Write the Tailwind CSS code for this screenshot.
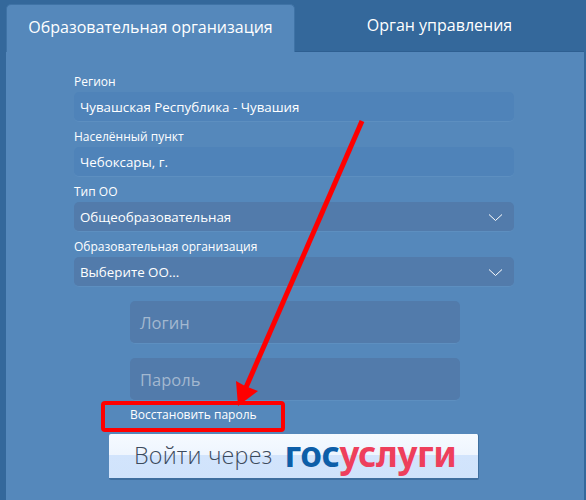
<!DOCTYPE html>
<html lang="ru">
<head>
    <meta charset="UTF-8">
    <title>Вход</title>
    <script src="https://cdn.jsdelivr.net/npm/@tailwindcss/browser@4"></script>
</head>
<body class="bg-[#34689b] h-[500px] overflow-hidden font-['Open_Sans',sans-serif] text-white relative">
    <div class="pl-[6px] pt-[4px] w-[584px]">
        <!-- Вкладки -->
        <div class="flex h-[48px] text-[16px]">
            <div class="w-[289px] bg-[#5588bb] rounded-t-[5px] border-t border-x border-[#3f73a6] flex items-center justify-center pb-[3px]">Образовательная организация</div>
            <div class="flex-1 border-b border-[#2e5f91] flex items-center justify-center pb-[5px]">Орган управления</div>
        </div>

        <!-- Форма -->
        <div class="bg-[#5588bb] h-[448px] pt-[24px] px-[68px] text-[12px]">
            <div class="w-[440px]">
                <div class="h-[16px] leading-[12px]">Регион</div>
                <div class="h-[30px] pt-[2px] rounded-[5px] bg-[#4f83b9] border-b border-[#5d8fc0] flex items-center px-[6px] text-[13.33px]">Чувашская Республика - Чувашия</div>
                <div class="h-[25px] pt-[7px] leading-[15px]">Населённый пункт</div>
                <div class="h-[30px] pt-[2px] rounded-[5px] bg-[#4f83b9] border-b border-[#5d8fc0] flex items-center px-[6px] text-[13.33px]">Чебоксары, г.</div>
                <div class="h-[25px] pt-[7px] leading-[15px]">Тип ОО</div>
                <div class="h-[30px] pt-[2px] rounded-[5px] bg-[#527bab] border-b border-[#5d8fc0] flex items-center justify-between pl-[6px] pr-[11px] text-[13.33px]">
                    <span>Общеобразовательная</span>
                    <svg width="15" height="9" viewBox="0 0 15 9" fill="none" stroke="#ffffff" stroke-width="1"><path d="M1 1.5 L7.5 7.5 L14 1.5"/></svg>
                </div>
                <div class="h-[25px] pt-[7px] leading-[15px]">Образовательная организация</div>
                <div class="h-[30px] pt-[2px] rounded-[5px] bg-[#527bab] border-b border-[#5d8fc0] flex items-center justify-between pl-[6px] pr-[11px] text-[13.33px]">
                    <span>Выберите ОО...</span>
                    <svg width="15" height="9" viewBox="0 0 15 9" fill="none" stroke="#ffffff" stroke-width="1"><path d="M1 1.5 L7.5 7.5 L14 1.5"/></svg>
                </div>
            </div>

            <div class="ml-[56px] w-[330px] mt-[14px] flex flex-col gap-[14px]">
                <div class="h-[43px] pt-[2px] rounded-[5px] bg-[#527bab] border-b border-[#5d8fc0] flex items-center px-[10px] text-[16.5px] text-[#a3b8d0]">Логин</div>
                <div class="h-[43px] pt-[2px] rounded-[5px] bg-[#527bab] border-b border-[#5d8fc0] flex items-center px-[10px] text-[16.5px] text-[#a3b8d0]">Пароль</div>
            </div>

            <div class="ml-[56px] mt-[5px] h-[18px] leading-[18px] text-[12px]">Восстановить пароль</div>

            <!-- Кнопка госуслуг -->
            <div class="ml-[35px] mt-[10px] w-[370px] h-[46px] rounded-[2px] border-b-2 border-r border-[#3f6f9f] bg-[linear-gradient(#f6faff_0%,#eef5fe_48%,#d2e4fc_48%,#d0e3fb_100%)] flex items-center pl-[25px] pb-[1px]">
                <span class="text-[23.3px] font-light text-[#3c4a5c] tracking-[0.2px]">Войти через</span>
                <span class="ml-[12px] text-[35px] font-bold font-['Noto_Sans',sans-serif] leading-none pb-[5px] tracking-[-0.4px]"><span class="text-[#0d5ea8]">гос</span><span class="text-[#ee3f5c]">услуги</span></span>
            </div>
        </div>
    </div>

    <!-- Красная рамка и стрелка поверх скриншота -->
    <div class="absolute left-[101px] top-[401px] w-[184px] h-[31px] border-[4px] border-[#ff0000] rounded-[4px]"></div>
    <svg class="absolute left-0 top-0" width="586" height="500" viewBox="0 0 586 500" fill="none">
        <path d="M362 121 L244 392" stroke="#ff0000" stroke-width="5"/>
        <path d="M238 406 L236 381 L245 386 L258 391 Z" fill="#ff0000"/>
    </svg>
</body>
</html>
